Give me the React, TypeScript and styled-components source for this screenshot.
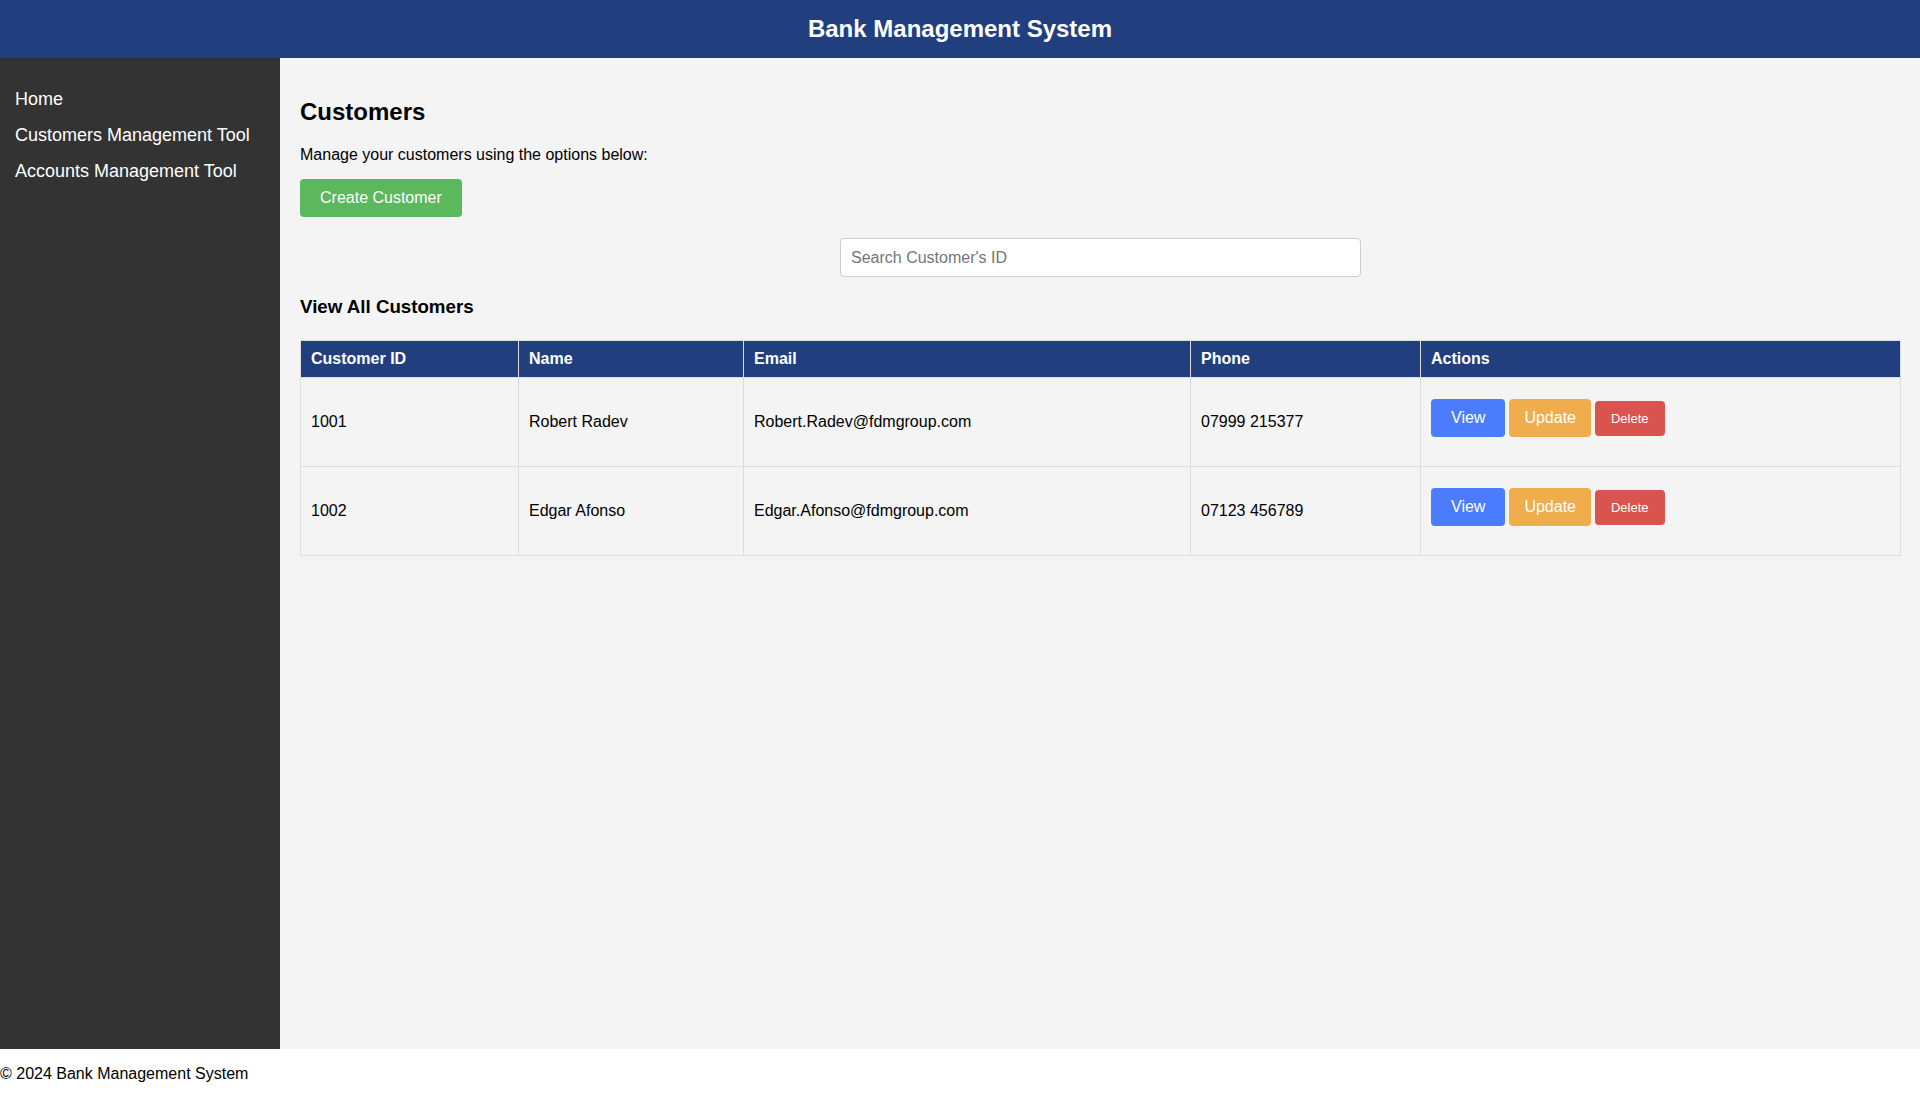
import styled, { createGlobalStyle } from 'styled-components'

const GlobalStyle = createGlobalStyle`
  html, body {
    margin: 0;
    padding: 0;
    font-family: 'Liberation Sans', Arial, sans-serif;
    color: #000;
    background: #fff;
  }
  * {
    box-sizing: border-box;
  }
`

const Page = styled.div`
  display: flex;
  flex-direction: column;
  min-height: 100vh;
`
const Header = styled.header`
  background-color: #213f7f;
  color: #fff;
  height: 58px;
  display: flex;
  align-items: center;
  justify-content: center;
`
const HeaderTitle = styled.h1`
  margin: 0;
  font-size: 24px;
  font-weight: bold;
`
const Body = styled.div`
  flex: 1;
  display: flex;
`
const Sidebar = styled.nav`
  width: 280px;
  flex-shrink: 0;
  background-color: #333;
  padding: 31px 15px;
  display: flex;
  flex-direction: column;
  gap: 15px;
`
const NavLink = styled.a`
  color: #fff;
  text-decoration: none;
  font-size: 18px;
  line-height: 21px;
`
const Main = styled.main`
  flex: 1;
  background-color: #f4f4f4;
  padding: 20px 20px 40px;
`
const Title = styled.h2`
  margin: 20px 0 20px;
  font-size: 24px;
  line-height: 28px;
`
const Intro = styled.p`
  margin: 0 0 15px;
  font-size: 16px;
  line-height: 18px;
`
const Button = styled.button<{ $bg: string; $small?: boolean; $wide?: boolean }>`
  background-color: ${(p) => p.$bg};
  color: #fff;
  border: none;
  border-radius: 4px;
  font-family: inherit;
  font-size: ${(p) => (p.$small ? '13px' : '16px')};
  line-height: ${(p) => (p.$small ? '15px' : '18px')};
  padding: ${(p) => (p.$wide ? '10px 20px' : p.$small ? '10px 16px' : '10px 15px')};
  cursor: pointer;
`
const CreateButton = styled(Button)`
  padding: 10px 20px;
`
const SearchRow = styled.div`
  display: flex;
  justify-content: center;
  margin-top: 21px;
`
const SearchInput = styled.input`
  width: 521px;
  height: 39px;
  padding: 0 10px;
  border: 1px solid #ccc;
  border-radius: 4px;
  font-family: inherit;
  font-size: 16px;
  background: #fff;
  &::placeholder {
    color: #757575;
  }
`
const SubTitle = styled.h3`
  margin: 19px 0 22px;
  font-size: 18.72px;
  line-height: 22px;
`
const Table = styled.table`
  width: 100%;
  border-collapse: collapse;
  table-layout: fixed;
`
const Th = styled.th<{ $w: number }>`
  width: ${(p) => p.$w}px;
  background-color: #213f7f;
  color: #fff;
  text-align: left;
  font-size: 16px;
  line-height: 18px;
  padding: 9px 10px;
  border: 1px solid #ddd;
`
const Tr = styled.tr`
  height: 89px;
`
const Td = styled.td`
  font-size: 16px;
  line-height: 18px;
  padding: 10px;
  border: 1px solid #ddd;
  vertical-align: middle;
`
const Actions = styled.div`
  display: flex;
  align-items: center;
  gap: 4px;
  padding-bottom: 8px;
`
const Footer = styled.footer`
  background: #fff;
  padding: 16px 0 17px;
  font-size: 16px;
  line-height: 18px;
`

const columns = [
  { label: 'Customer ID', w: 218 },
  { label: 'Name', w: 225 },
  { label: 'Email', w: 447 },
  { label: 'Phone', w: 230 },
  { label: 'Actions', w: 480 },
]

const customers = [
  { id: 1001, name: 'Robert Radev', email: 'Robert.Radev@fdmgroup.com', phone: '07999 215377' },
  { id: 1002, name: 'Edgar Afonso', email: 'Edgar.Afonso@fdmgroup.com', phone: '07123 456789' },
]

const App = () => {
  return (
    <Page>
      <GlobalStyle />
      <Header>
        <HeaderTitle>Bank Management System</HeaderTitle>
      </Header>
      <Body>
        <Sidebar>
          <NavLink href='#'>Home</NavLink>
          <NavLink href='#'>Customers Management Tool</NavLink>
          <NavLink href='#'>Accounts Management Tool</NavLink>
        </Sidebar>
        <Main>
          <Title>Customers</Title>
          <Intro>Manage your customers using the options below:</Intro>
          <CreateButton $bg='#5cb85c'>Create Customer</CreateButton>
          <SearchRow>
            <SearchInput type='text' placeholder="Search Customer's ID" />
          </SearchRow>
          <SubTitle>View All Customers</SubTitle>
          <Table>
            <thead>
              <tr>
                {columns.map((c) => (
                  <Th key={c.label} $w={c.w}>
                    {c.label}
                  </Th>
                ))}
              </tr>
            </thead>
            <tbody>
              {customers.map((c) => (
                <Tr key={c.id}>
                  <Td>{c.id}</Td>
                  <Td>{c.name}</Td>
                  <Td>{c.email}</Td>
                  <Td>{c.phone}</Td>
                  <Td>
                    <Actions>
                      <Button $bg='#4a7cfd' $wide>
                        View
                      </Button>
                      <Button $bg='#f0ad4e'>Update</Button>
                      <Button $bg='#d9534f' $small>
                        Delete
                      </Button>
                    </Actions>
                  </Td>
                </Tr>
              ))}
            </tbody>
          </Table>
        </Main>
      </Body>
      <Footer>© 2024 Bank Management System</Footer>
    </Page>
  )
}

export default App
